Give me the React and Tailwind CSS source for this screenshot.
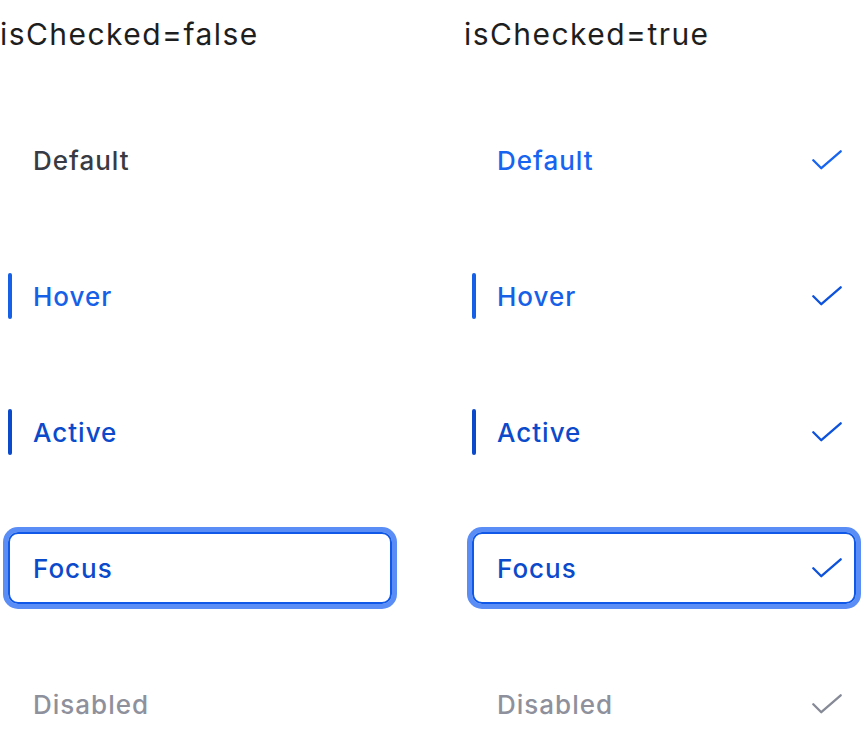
import React from "react";

const states = ["Default", "Hover", "Active", "Focus", "Disabled"];

const textColor = {
  Default: "text-[#383b43]",
  Hover: "text-[#1660e8]",
  Active: "text-[#0b4acb]",
  Focus: "text-[#0b4acb]",
  Disabled: "text-[#8e919c]",
};

const Check = ({ color }) => (
  <svg width="30" height="20" viewBox="0 0 30 20" fill="none">
    <path d="M1.3 10.2 9.3 18.2 28.7 1.3" stroke={color} strokeWidth="2.3" strokeLinecap="round" strokeLinejoin="round" />
  </svg>
);

const Item = ({ state, checked }) => {
  const isFocus = state === "Focus";
  const hasBar = state === "Hover" || state === "Active";
  const checkColor = state === "Disabled" ? "#868a96" : state === "Default" ? "#1764f0" : "#0d52dc";
  const color = checked && state === "Default" ? "text-[#1764f0]" : textColor[state];

  return (
    <div
      className={`relative h-[72px] ml-2 w-[384px] flex items-center justify-between rounded-[10px] ${
        isFocus ? "border-2 border-[#0f58e8] ring-[5px] ring-[#5a8df6] pl-[23px] pr-[12px]" : "pl-[25px] pr-[14px]"
      }`}
    >
      {hasBar && (
        <span className={`absolute left-0 top-[13px] h-[46px] w-[4px] rounded-full ${state === "Hover" ? "bg-[#1660e8]" : "bg-[#0b4acb]"}`} />
      )}
      <span className={`text-[26px] font-medium tracking-[1px] ${color}`}>{state}</span>
      {checked && <Check color={checkColor} />}
    </div>
  );
};

const Column = ({ checked }) => (
  <div className="w-[400px] flex flex-col">
    <h2 className="h-[68px] leading-[68px] text-[30px] text-[#1e1e1e] tracking-[1.45px]">
      isChecked={checked ? "true" : "false"}
    </h2>
    <div className="mt-[56px] flex flex-col gap-[64px]">
      {states.map((s) => (
        <Item key={s} state={s} checked={checked} />
      ))}
    </div>
  </div>
);

export default function App() {
  return (
    <div className="w-[864px] h-[740px] bg-white flex gap-[64px]" style={{ fontFamily: "Inter, 'Noto Sans', sans-serif" }}>
      <Column checked={false} />
      <Column checked={true} />
    </div>
  );
}
